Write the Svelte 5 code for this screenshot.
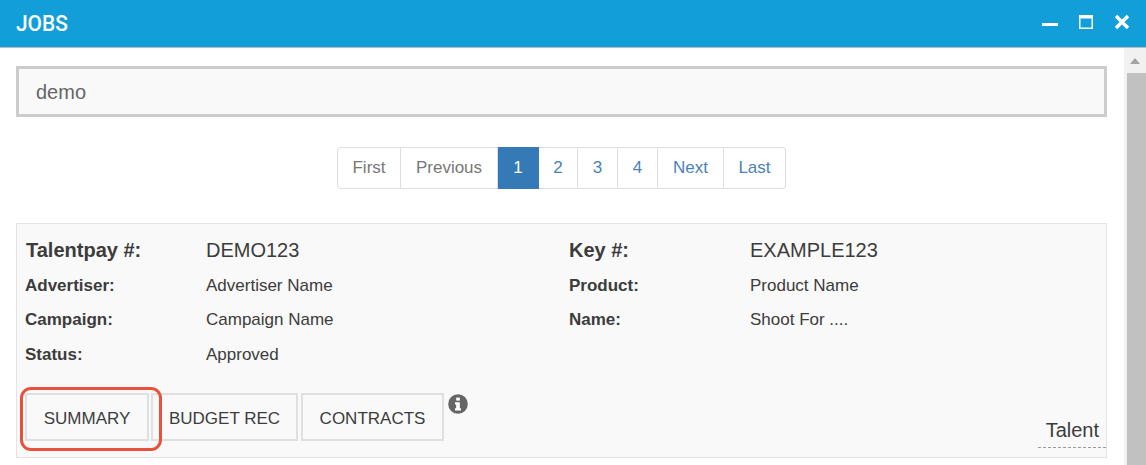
<script>
  const pages = ['2', '3', '4', 'Next', 'Last'];
  const rows = [
    { a: 'Advertiser:', b: 'Advertiser Name', c: 'Product:', d: 'Product Name' },
    { a: 'Campaign:', b: 'Campaign Name', c: 'Name:', d: 'Shoot For ....' },
    { a: 'Status:', b: 'Approved', c: '', d: '' }
  ];
</script>

<div class="win">
  <header class="bar">
    <span class="title">JOBS</span>
    <div class="ctrls">
      <svg width="16" height="16" viewBox="0 0 16 16"><rect x="0" y="9" width="16" height="3" fill="#fff" /></svg>
      <svg width="16" height="16" viewBox="0 0 16 16"><path d="M1 1h14v14H1z M2.5 4.5v9h11v-9z" fill="#fff" fill-rule="evenodd" /></svg>
      <svg width="16" height="16" viewBox="0 0 16 16"><path d="M2 2l12 12M14 2L2 14" stroke="#fff" stroke-width="3.4" /></svg>
    </div>
  </header>

  <div class="main">
    <div class="content">
      <div class="search">demo</div>

      <nav class="pager">
        <span class="pg off">First</span>
        <span class="pg off prev">Previous</span>
        <span class="pg cur">1</span>
        {#each pages as p, i}
          <span class="pg" class:num={p.length === 1} class:first={i === 0}>{p}</span>
        {/each}
      </nav>

      <section class="panel">
        <div class="row big">
          <b>Talentpay #:</b><span>DEMO123</span><b>Key #:</b><span>EXAMPLE123</span>
        </div>
        {#each rows as r}
          <div class="row">
            <b>{r.a}</b><span>{r.b}</span><b>{r.c}</b><span>{r.d}</span>
          </div>
        {/each}

        <div class="tabs">
          <button class="tab sum">SUMMARY</button>
          <button class="tab bud">BUDGET REC</button>
          <button class="tab con">CONTRACTS</button>
          <svg class="info" width="20" height="20" viewBox="0 0 20 20">
            <circle cx="10" cy="10" r="9.8" fill="#666" />
            <rect x="8.2" y="3.6" width="3.6" height="3" fill="#fff" />
            <path d="M7 8.2h4.8v6h1.2v2.2H7v-2.2h1.2v-3.8H7z" fill="#fff" />
          </svg>
          <span class="talent">Talent</span>
          <span class="mark" aria-hidden="true"></span>
        </div>
      </section>
    </div>

    <div class="scroll">
      <span class="arrow"></span>
      <span class="thumb"></span>
    </div>
  </div>
</div>

<style>
  :global(body) {
    margin: 0;
    background: #fff;
    overflow: hidden;
  }

  .win {
    width: 1146px;
    height: 465px;
    overflow: hidden;
    font-family: "Liberation Sans", Arial, sans-serif;
    color: #3c3c3c;
  }

  .bar {
    height: 47px;
    background: #119ed9;
    border-bottom: 1px solid #bbb;
    display: flex;
    align-items: center;
    justify-content: space-between;
    padding: 0 16px;
  }

  .title {
    font-family: Roboto, sans-serif;
    font-size: 22px;
    font-weight: 500;
    color: #fff;
    transform: scaleX(0.95);
    transform-origin: left;
  }

  .ctrls {
    display: flex;
    gap: 20px;
    margin: -3px 0 0 0;
  }

  .main {
    display: flex;
    height: 417px;
  }

  .content {
    width: 1107px;
    padding: 18px 0 0 16px;
    box-sizing: content-box;
  }

  .search {
    box-sizing: border-box;
    width: 1091px;
    height: 51px;
    border: 3px solid #ccc;
    background: #f9f9f9;
    padding-left: 17px;
    font-size: 20px;
    line-height: 47px;
    color: #666;
  }

  .pager {
    display: flex;
    width: 449px;
    height: 42px;
    margin: 30px 0 34px 321px;
    font-size: 17px;
  }

  .pg {
    box-sizing: border-box;
    height: 42px;
    line-height: 40px;
    border: 1px solid #ddd;
    border-left: 0;
    padding: 0 15px;
    color: #4a82b8;
    text-align: center;
  }

  .pg.num {
    width: 40px;
    padding: 0;
  }

  .pg.num.first {
    width: 39px;
  }

  .pg.off {
    color: #777;
  }

  .pg:first-child {
    border-left: 1px solid #ddd;
    border-radius: 4px 0 0 4px;
    width: 64px;
    padding: 0;
  }

  .pg.prev {
    width: 97px;
    padding: 0;
  }

  .pg:last-child {
    border-radius: 0 4px 4px 0;
    flex: 1;
    padding: 0;
  }

  .pg.cur {
    width: 41px;
    padding: 0;
    background: #337ab7;
    border-color: #337ab7;
    color: #fff;
  }

  .panel {
    box-sizing: border-box;
    position: relative;
    width: 1091px;
    height: 235px;
    background: #f9f9f9;
    border: 1px solid #e3e3e3;
    padding-top: 8px;
  }

  .row {
    display: grid;
    grid-template-columns: 181px 363px 181px 1fr;
    padding-left: 8px;
    height: 34.5px;
    align-items: center;
    font-size: 17px;
    line-height: 36px;
  }

  .row b {
    font-weight: 700;
  }

  .row.big {
    font-size: 20px;
    padding-left: 9px;
    height: 35.75px;
    grid-template-columns: 180px 363px 181px 1fr;
  }

  .tabs {
    display: flex;
    position: relative;
    margin: 21.75px 0 0 8px;
    height: 48px;
  }

  .tab {
    box-sizing: border-box;
    height: 48px;
    padding: 3px 0 0;
    border: 2px solid #e0e0e0;
    background: #f9f9f9;
    color: #3c3c3c;
    font-family: inherit;
    font-size: 17px;
  }

  .sum {
    width: 124px;
  }

  .sum::after {
    content: "";
    position: absolute;
    left: -5px;
    top: -6px;
    width: 136px;
    height: 58px;
    border: 3.5px solid #e8523c;
    border-radius: 11px;
  }

  .bud {
    width: 147px;
    margin-left: 2px;
  }

  .con {
    width: 143px;
    margin-left: 3px;
  }

  .info {
    margin: 1px 0 0 4px;
  }

  .talent {
    position: absolute;
    right: 7px;
    top: 25px;
    font-size: 20px;
    line-height: 24px;
  }

  .mark {
    position: absolute;
    right: 0;
    top: 54px;
    width: 68px;
    border-top: 1px dashed #999;
  }

  .scroll {
    width: 22px;
    background: #f1f1f1;
    position: relative;
    flex: none;
    margin-left: 1px;
  }

  .arrow {
    position: absolute;
    left: 6px;
    top: 10px;
    border: 5px solid transparent;
    border-top: 0;
    border-bottom: 6px solid #a3a3a3;
    width: 0;
  }

  .thumb {
    position: absolute;
    left: 3px;
    right: 0;
    top: 25px;
    bottom: 0;
    background: #c1c1c1;
  }
</style>
